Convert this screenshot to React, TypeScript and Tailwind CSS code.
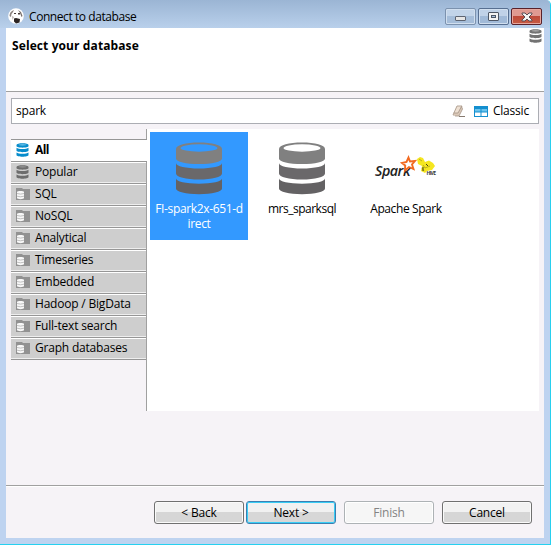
import React from "react";

const BODY = "M0 0C0 3.2 10 5.500 23 5.500S46 3.200 46 0V10.500C46 14 36 16.500 23 16.500S0 14 0 10.500Z";

function BigDatabase() {
  return (
    <svg width="46" height="53" viewBox="0 0 46 53" className="block shrink-0">
      <path d="M0 7C0 3 10 .5 23 .5S46 3 46 7V16.500C46 20 36 22 23 22S0 20 0 16.500Z" fill="#808080" />
      <ellipse cx="23" cy="6" rx="18.500" ry="3.700" className="fill-[var(--hole)]" />
      <path d={BODY} transform="translate(0 21)" fill="#6a686a" />
      <path d={BODY} transform="translate(0 36.500) scale(1 .95)" fill="#646264" />
    </svg>
  );
}

function SmallDatabase({ color, light }: { color: string; light: string }) {
  return (
    <svg width="13" height="14" viewBox="0 0 13 14" className="block shrink-0">
      <path d="M.5 2C.5-.4 12.500-.4 12.500 2V3C12.500 5.200 .5 5.200 .5 3Z" fill={color} />
      <ellipse cx="6.500" cy="1.800" rx="4" ry=".6" fill={light} />
      <path d="M.5 4.700C2.500 6.500 10.500 6.500 12.500 4.700V7.500C12.500 9.700 .5 9.700 .5 7.500ZM.5 9.400C2.500 11.200 10.500 11.200 12.500 9.400V12C12.500 14.300 .5 14.300 .5 12Z" fill={color} />
    </svg>
  );
}

function FolderIcon() {
  return (
    <svg width="14" height="12" viewBox="0 0 14 12" className="block shrink-0">
      <path d="M0 0H6L7 1H14V12H0Z" fill="#929292" />
      <path d="M1 4C1 2.700 8 2.700 8 4V10C8 11.500 1 11.500 1 10Z" fill="#f8f8f8" />
      <path d="M1 5.500Q4.500 6.700 8 5.500M1 8.200Q4.500 9.400 8 8.200" stroke="#a8a8a8" strokeWidth=".7" fill="none" />
    </svg>
  );
}

function DogIcon() {
  return (
    <svg width="16" height="16" viewBox="0 0 16 16" className="block shrink-0">
      <circle cx="8" cy="8" r="7.800" fill="#fff" />
      <path d="M1.500 8C1.500 5 3 3 6 2L5 4 3.500 6 3 9Z" fill="#8b827e" />
      <path d="M10 2L13 4 14.500 8 13.500 9 12 5Z" fill="#786e6a" />
      <path d="M6 10.500L8 10 12 11 11.500 14.500 8 15.500 6 13.500Z" fill="#2c2523" />
      <path d="M6 5H8V6H6ZM10 5H12V6.500H10Z" fill="#483c38" />
      <path d="M4 8L6 9 4.500 12Z" fill="#bbb3af" />
    </svg>
  );
}

function SparkLogo() {
  return (
    <svg width="61" height="26" viewBox="0 0 61 26" className="block shrink-0 overflow-visible">
      <text x="0" y="20" fontSize="14.500" fontStyle="italic" fontWeight="600" fontFamily="'Open Sans', sans-serif" fill="#222" textLength="35" lengthAdjust="spacingAndGlyphs">Spark</text>
      <path d="M33.500 1.500L35 5.500 40 5 37 8.500 38.500 13 34 11 30 14.500 30.200 9.500 27 7 31.500 6Z" fill="#fff" stroke="#f26a21" strokeWidth="1.900" />
      <path d="M42 3L45 1 48 2 50 6 54 4.500 58 7 60 10 57 14 52 15 50 17 46 15 47 10 43 8Z" fill="#f5e620" />
      <path d="M44 3L47 5M48 9L50 12 55 10M47 12L49 15" stroke="#a39a18" strokeWidth=".7" fill="none" />
      <path d="M48 11V15M51 8L53 10" stroke="#454216" />
      <text x="51.500" y="19" fontSize="5" fontWeight="700" fontFamily="'Open Sans', sans-serif" fill="#333" textLength="9">HIVE</text>
    </svg>
  );
}

const categories = ["SQL", "NoSQL", "Analytical", "Timeseries", "Embedded", "Hadoop / BigData", "Full-text search", "Graph databases"];

function CategoryRow({ label, icon }: { label: string; icon: React.ReactNode }) {
  return (
    <div className="flex h-[22px] items-center border-b border-[#969696] bg-[#cecece] pb-px shadow-[inset_0_1px_0_#fff,inset_0_-1px_0_#eee]">
      <div className="flex w-6 justify-start pb-px pl-[5px]">{icon}</div>
      <span className="leading-4">{label}</span>
    </div>
  );
}

const buttonBase = "flex h-[23px] w-[90px] items-center justify-center rounded-[3px] border pt-px ";

export default function App() {
  return (
    <div className="flex h-[545px] w-[551px] flex-col overflow-hidden rounded-tr-[5px] border-r border-b border-[#26d0ef] bg-[#bed3f0] font-['Open_Sans','Noto_Sans',sans-serif] text-[12px] tracking-[-0.2px] text-black">
      <header className="flex h-7 shrink-0 items-start bg-linear-to-b from-[#9bb5d4] to-[#b9d0eb] pt-2 pl-2">
        <DogIcon />
        <span className="ml-[5px] leading-[17px] tracking-[-0.43px]">Connect to database</span>
        <div className="ml-auto flex gap-[2px] pr-[8px]">
          <div className="flex h-[17px] w-[31px] items-center justify-center rounded-[2px] border border-[#7c92ae] bg-linear-to-b from-[#c2d4e9] from-50% to-[#a5bdd9] to-50% shadow-[inset_0_0_0_1px_#d1dfef]">
            <div className="mt-1 h-[5px] w-[11px] rounded-[1px] border border-[#5d6471] bg-[#e5e5e5]" />
          </div>
          <div className="flex h-[17px] w-[31px] items-center justify-center rounded-[2px] border border-[#576f91] bg-linear-to-b from-[#c0d2e8] from-50% to-[#a1bad8] to-50% shadow-[inset_0_0_0_1px_#d1dfef]">
            <div className="flex h-[9px] w-[11px] items-center justify-center rounded-[1px] border border-[#4d5665] bg-[#f3f3f3]">
              <div className="h-[3px] w-[5px] border border-[#4d5665] bg-[#a9c2df]" />
            </div>
          </div>
          <div className="flex h-[17px] w-[31px] items-center justify-center rounded-[2px] border border-[#59212a] bg-linear-to-b from-[#df9991] from-45% via-[#bd4839] via-45% to-[#c65b43] shadow-[inset_0_0_0_1px_#e6a69d]">
            <svg width="12" height="10" viewBox="0 0 12 10">
              <path d="M1 1H4L6 3 8 1H11V2L8 5 11 8V9H8L6 7 4 9H1V8L4 5 1 2Z" fill="#f4f4f4" stroke="#594d55" />
            </svg>
          </div>
        </div>
      </header>

      <div className="mr-[6px] ml-[6px] flex h-[510px] shrink-0 flex-col bg-[#f6f3f7]">
        <section className="flex h-16 shrink-0 justify-between border-b border-[#a0a0a0] bg-white pr-[2px] pl-[6px]">
          <h1 className="mt-[10px] text-[12px] leading-4 font-bold tracking-[0.1px]">Select your database</h1>
          <div className="mt-px"><SmallDatabase color="#737373" light="#b5b5b5" /></div>
        </section>

        <div className="mt-[6px] ml-[5px] flex h-[26px] w-[528px] shrink-0 items-center border border-[#abadb3] bg-white pl-1">
          <span>spark</span>
          <div className="ml-auto flex items-center pr-[9px]">
            <svg width="14" height="13" viewBox="0 0 14 13" className="mr-[8px]">
              <path d="M5 1H10L6 10H1Z" fill="#eee0d2" stroke="#b4a496" />
              <path d="M1.500 8H6L9.500 1.500L10.500 4L7 11H3" fill="#dac8b8" stroke="#a49486" strokeWidth=".8" />
              <path d="M7 11.500H13" stroke="#867a70" />
            </svg>
            <svg width="14" height="11" viewBox="0 0 14 11" className="mr-[5px]">
              <path d="M0 0H14V11H0Z" fill="#148fcf" />
              <path d="M1 3H6.500V5.500H1ZM7.500 3H13V5.500H7.500Z" fill="#6bc4ed" />
              <path d="M1 6.500H6.500V10H1ZM7.500 6.500H13V10H7.500Z" fill="#fff" />
            </svg>
            <span>Classic</span>
          </div>
        </div>

        <main className="mt-[5px] ml-[5px] flex h-[282px] w-[528px] shrink-0">
          <aside className="flex w-[136px] shrink-0 flex-col">
            <div className="h-[10px] shrink-0 border-r border-[#a0a0a0]" />
            <div className="flex h-[23px] shrink-0 items-center border-t border-b border-[#969696] bg-white pb-[2px]">
              <div className="w-6 pl-[5px]"><SmallDatabase color="#078ccc" light="#7dc9ed" /></div>
              <b className="leading-4 tracking-[-0.6px]">All</b>
            </div>
            <div className="grow border-r border-[#a0a0a0]">
              <CategoryRow label="Popular" icon={<SmallDatabase color="#6d6d6d" light="#999" />} />
              {categories.map((name) => <CategoryRow key={name} label={name} icon={<FolderIcon />} />)}
            </div>
          </aside>
          <section className="flex grow items-start gap-[5px] bg-white pt-[3px] pl-[3px] tracking-[-0.5px]">
            <div className="flex h-[108px] w-[98px] flex-col items-center bg-[#3399ff] pt-[10px] text-white [--hole:#3399ff]">
              <BigDatabase />
              <div className="mt-[6px] text-center leading-[15px] tracking-[-0.35px]">FI-spark2x-651-d<br />irect</div>
            </div>
            <div className="flex h-[108px] w-[98px] flex-col items-center pt-[10px] [--hole:#fff]">
              <BigDatabase />
              <div className="mt-[6px] leading-[15px]">mrs_sparksql</div>
            </div>
            <div className="flex h-[108px] w-[98px] flex-col items-center pt-[24px]">
              <SparkLogo />
              <div className="mt-[19px] ml-[2px] leading-[15px] tracking-[-0.4px]">Apache Spark</div>
            </div>
          </section>
        </main>

        <footer className="mt-[74px] flex h-[53px] shrink-0 border-t border-[#a0a0a0] pt-[15px] pl-[148px] shadow-[inset_0_1px_0_#fff]">
          <div className={buttonBase + "border-[#707070] bg-linear-to-b from-[#f2f2f2] from-50% to-[#d6d6d6] to-50% shadow-[inset_0_0_0_1px_#fafafa]"}>&lt; Back</div>
          <div className={buttonBase + "ml-[2px] border-[#3c7fb1] bg-linear-to-b from-[#f1f1f1] from-50% to-[#d7d7d7] to-50% shadow-[inset_0_0_0_1px_#39cdf5]"}>Next &gt;</div>
          <div className={buttonBase + "ml-[8px] border-[#adb2b5] bg-[#f6f6f6] text-[#838383] shadow-[inset_0_0_0_1px_#fff]"}>Finish</div>
          <div className={buttonBase + "ml-[8px] border-[#707070] bg-linear-to-b from-[#f2f2f2] from-50% to-[#d6d6d6] to-50% shadow-[inset_0_0_0_1px_#fafafa]"}>Cancel</div>
        </footer>
      </div>
    </div>
  );
}
